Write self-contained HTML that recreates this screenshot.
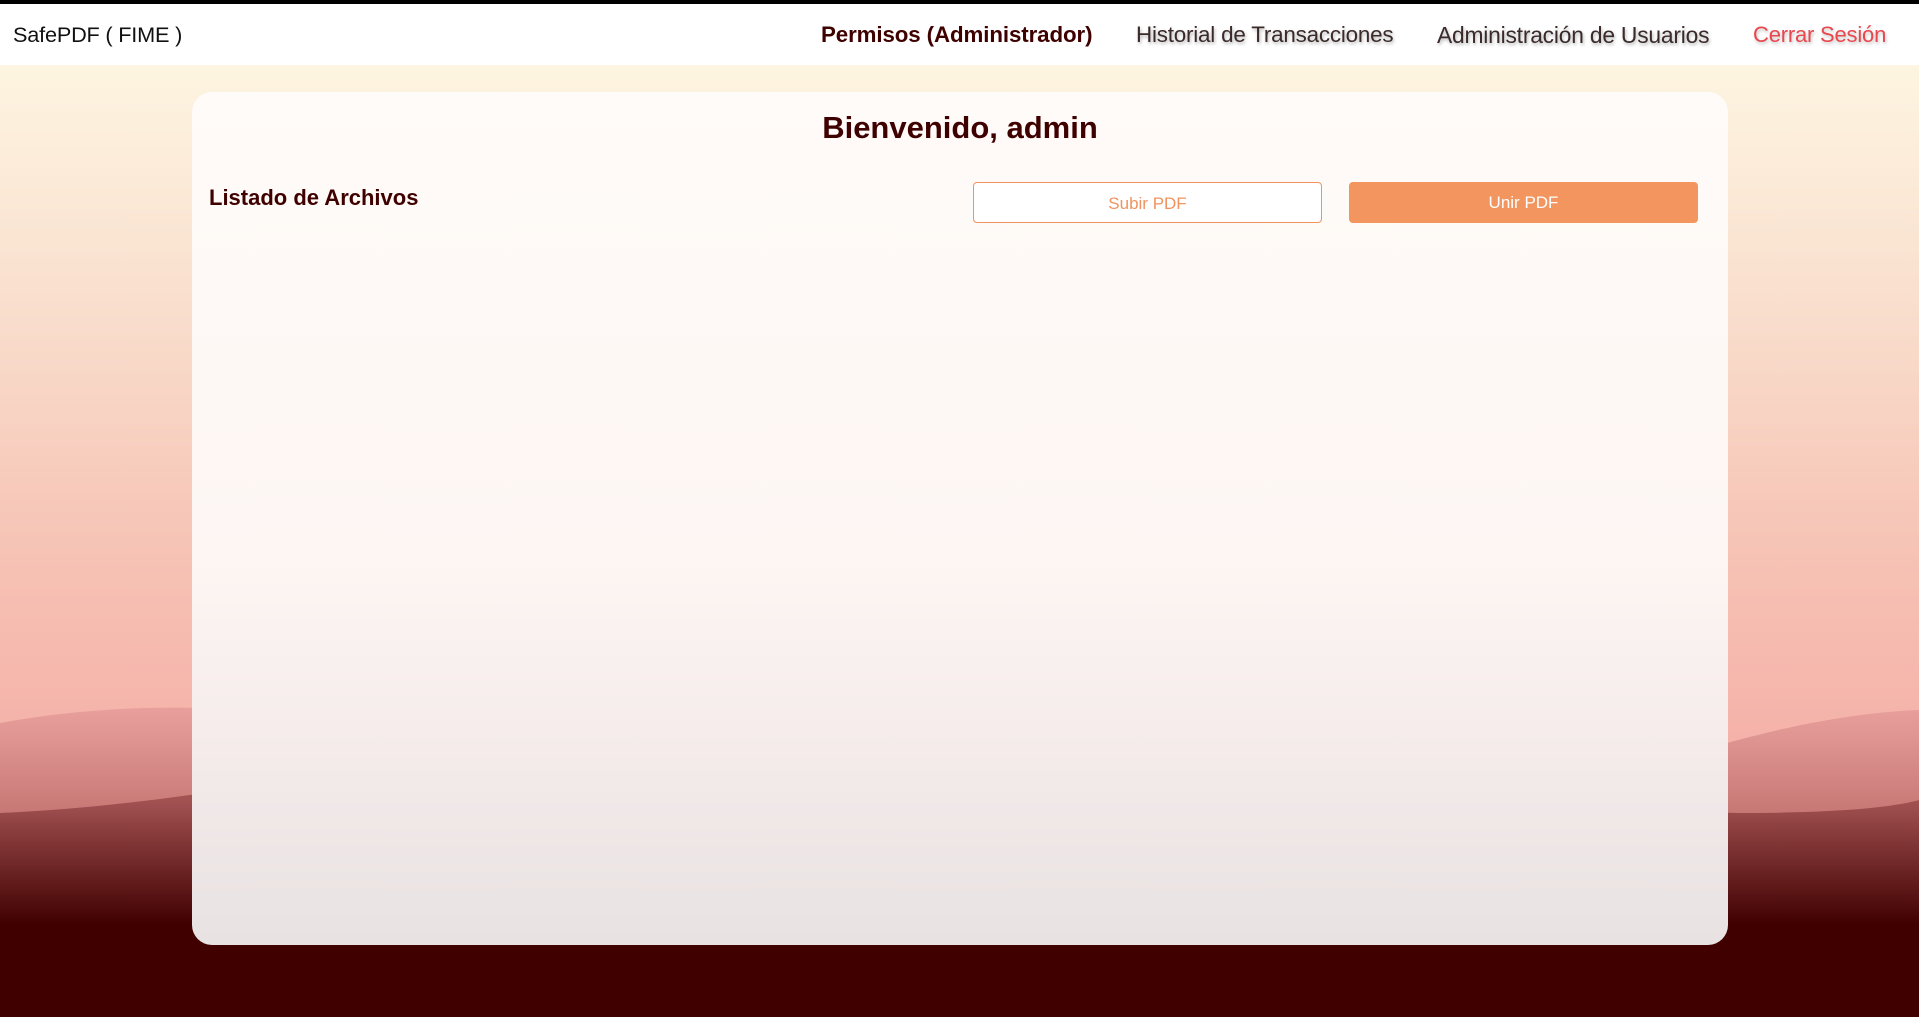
<!DOCTYPE html>
<html><head><meta charset="utf-8"><style>
*{margin:0;padding:0;box-sizing:border-box}
html,body{width:1919px;height:1017px;overflow:hidden}
body{font-family:"Liberation Sans",sans-serif;position:relative;
background:linear-gradient(180deg,#fdf5e1 65px,#f9dccb 330px,#f6c2b4 560px,#f5b0a8 760px);}
.top{position:absolute;left:0;top:0;width:1919px;height:4px;background:#000}
.nav{position:absolute;left:0;top:4px;width:1919px;height:61px;background:#fff}
.nav span{position:absolute;top:18px;font-size:22px;line-height:26px;white-space:nowrap;letter-spacing:-0.2px}
.nav .n{color:#3a2a2a;text-shadow:1px 2px 3px rgba(0,0,0,.3)}
svg.bg{position:absolute;left:0;top:0}
.card{position:absolute;left:192px;top:92px;width:1536px;height:853px;border-radius:20px;
background:linear-gradient(180deg,#fffbf8 0%,#fdf6f3 55%,#f5eceb 75%,#e8e2e2 100%)}
h1{position:absolute;left:0;width:100%;top:18px;text-align:center;font-size:31px;font-weight:bold;color:#3f0000}
.lst{position:absolute;left:17px;top:93px;font-size:22px;color:#3f0000;font-weight:bold}
.b{position:absolute;top:90px;width:349px;height:41px;border-radius:4px;font-size:17px;text-align:center;line-height:41px}
.b1{left:781px;border:1px solid #f0935f;color:#f0935f;background:#fff}
.b2{left:1157px;background:#f2955e;color:#fff}
</style></head><body>
<svg class="bg" width="1919" height="1017">
<defs>
<linearGradient id="g1" x1="0" y1="700" x2="0" y2="925" gradientUnits="userSpaceOnUse">
<stop offset="0" stop-color="#eba3a0"/><stop offset="0.5" stop-color="#c77875"/><stop offset="1" stop-color="#400000"/></linearGradient>
<linearGradient id="g2" x1="0" y1="800" x2="0" y2="925" gradientUnits="userSpaceOnUse">
<stop offset="0" stop-color="#a35252"/><stop offset="1" stop-color="#400000"/></linearGradient>
</defs>
<path d="M0,723 C60,712 130,706 200,708 C600,720 1200,800 1720,745 C1790,725 1860,712 1919,710 L1919,1017 L0,1017Z" fill="url(#g1)"/>
<path d="M0,813 C300,800 600,700 900,710 C1200,720 1500,815 1760,813 C1840,812 1890,808 1919,800 L1919,1017 L0,1017Z" fill="url(#g2)"/>
<rect x="0" y="923" width="1919" height="94" fill="#400000"/>
</svg>
<div class="top"></div>
<div class="nav">
<span style="left:13px;color:#111;font-size:21.7px">SafePDF ( FIME )</span>
<span style="left:821px;color:#3f0000;font-weight:bold;font-size:22.3px;letter-spacing:-0.1px">Permisos (Administrador)</span>
<span class="n" style="left:1136px;font-size:22.4px">Historial de Transacciones</span>
<span class="n" style="left:1437px;font-size:22.8px">Administración de Usuarios</span>
<span style="left:1753px;color:#e8474e;text-shadow:1px 2px 3px rgba(0,0,0,.25)">Cerrar Sesión</span>
</div>
<div class="card">
<h1>Bienvenido, admin</h1>
<div class="lst">Listado de Archivos</div>
<div class="b b1">Subir PDF</div>
<div class="b b2">Unir PDF</div>
</div>
</body></html>
